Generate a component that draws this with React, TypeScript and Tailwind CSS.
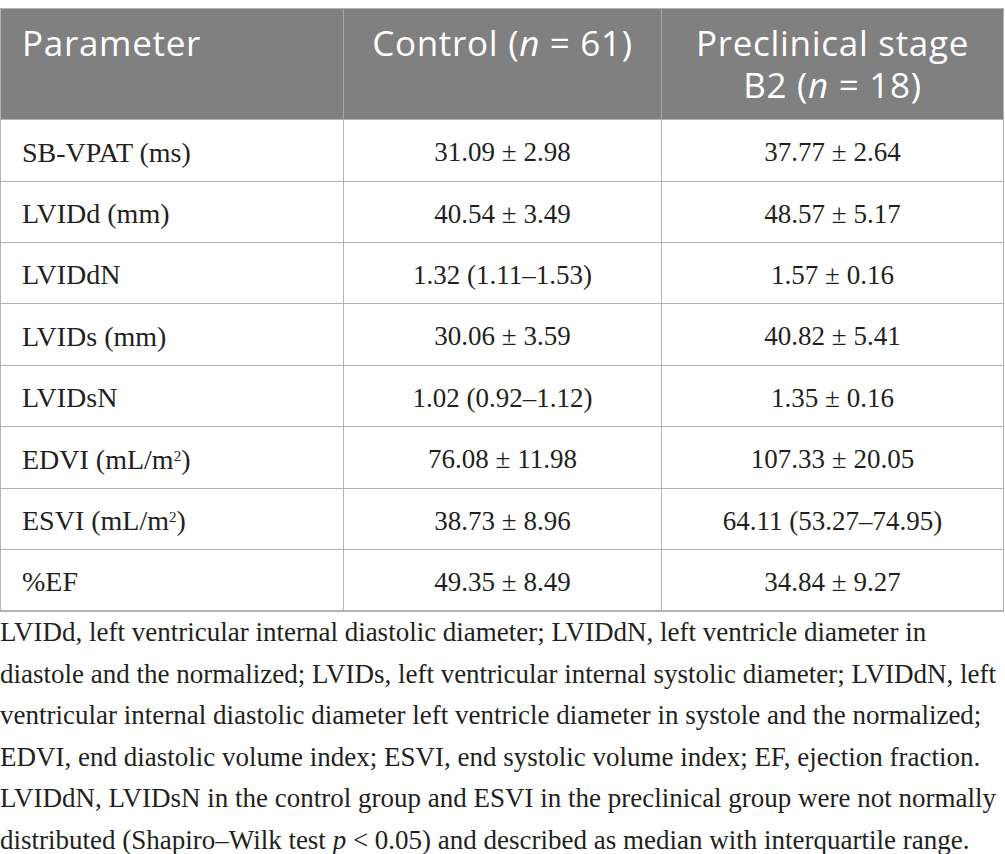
import React from "react";

const rows: { p: React.ReactNode; c: string; b: string; h: string }[] = [
  { p: "SB-VPAT (ms)", c: "31.09 ± 2.98", b: "37.77 ± 2.64", h: "h-[62px]" },
  { p: "LVIDd (mm)", c: "40.54 ± 3.49", b: "48.57 ± 5.17", h: "h-[61px]" },
  { p: "LVIDdN", c: "1.32 (1.11–1.53)", b: "1.57 ± 0.16", h: "h-[61px]" },
  { p: "LVIDs (mm)", c: "30.06 ± 3.59", b: "40.82 ± 5.41", h: "h-[62px]" },
  { p: "LVIDsN", c: "1.02 (0.92–1.12)", b: "1.35 ± 0.16", h: "h-[61px]" },
  {
    p: (
      <>
        EDVI (mL/m<sup className="text-[15px] relative -top-[4px]">2</sup>)
      </>
    ),
    c: "76.08 ± 11.98",
    b: "107.33 ± 20.05",
    h: "h-[62px]",
  },
  {
    p: (
      <>
        ESVI (mL/m<sup className="text-[15px] relative -top-[4px]">2</sup>)
      </>
    ),
    c: "38.73 ± 8.96",
    b: "64.11 (53.27–74.95)",
    h: "h-[61px]",
  },
  { p: "%EF", c: "49.35 ± 8.49", b: "34.84 ± 9.27", h: "h-[61px]" },
];

export default function App() {
  return (
    <div className="w-[1005px] bg-white pt-[8px]">
      <div className="w-[1004px] border border-[#b3b3b3] border-b-[2px]">
        <div
          className="grid grid-cols-[342px_318px_1fr] bg-[#808080] text-white h-[110px] text-[35px] leading-[42px] tracking-[0.7px]"
          style={{ fontFamily: '"Open Sans", "Noto Sans", sans-serif' }}
        >
          <div className="pl-[21px] pt-[13px]">Parameter</div>
          <div className="border-l border-[#a6a6a6] pt-[13px] text-center">
            Control (<i>n</i> = 61)
          </div>
          <div className="border-l border-[#a6a6a6] pt-[13px] text-center">
            Preclinical stage
            <br />
            B2 (<i>n</i> = 18)
          </div>
        </div>
        <div
          className="text-[#231f20] text-[27px]"
          style={{ fontFamily: '"Liberation Serif", "Times New Roman", serif' }}
        >
          {rows.map((r, i) => (
            <div
              key={i}
              className={`grid grid-cols-[342px_318px_1fr] border-t border-[#b3b3b3] ${r.h}`}
            >
              <div className="pl-[21px] flex items-center pt-[4px] text-[28px]">{r.p}</div>
              <div className="border-l border-[#b3b3b3] flex items-center justify-center pt-[4px]">
                {r.c}
              </div>
              <div className="border-l border-[#b3b3b3] flex items-center justify-center pt-[4px]">
                {r.b}
              </div>
            </div>
          ))}
        </div>
      </div>
      <div
        className="pt-0 text-[27px] leading-[41.6px] text-[#231f20] whitespace-nowrap"
        style={{ fontFamily: '"Liberation Serif", "Times New Roman", serif' }}
      >
        LVIDd, left ventricular internal diastolic diameter; LVIDdN, left ventricle diameter in
        <br />
        diastole and the normalized; LVIDs, left ventricular internal systolic diameter; LVIDdN, left
        <br />
        ventricular internal diastolic diameter left ventricle diameter in systole and the normalized;
        <br />
        EDVI, end diastolic volume index; ESVI, end systolic volume index; EF, ejection fraction.
        <br />
        LVIDdN, LVIDsN in the control group and ESVI in the preclinical group were not normally
        <br />
        distributed (Shapiro–Wilk test <i>p</i> &lt; 0.05) and described as median with interquartile range.
      </div>
    </div>
  );
}
